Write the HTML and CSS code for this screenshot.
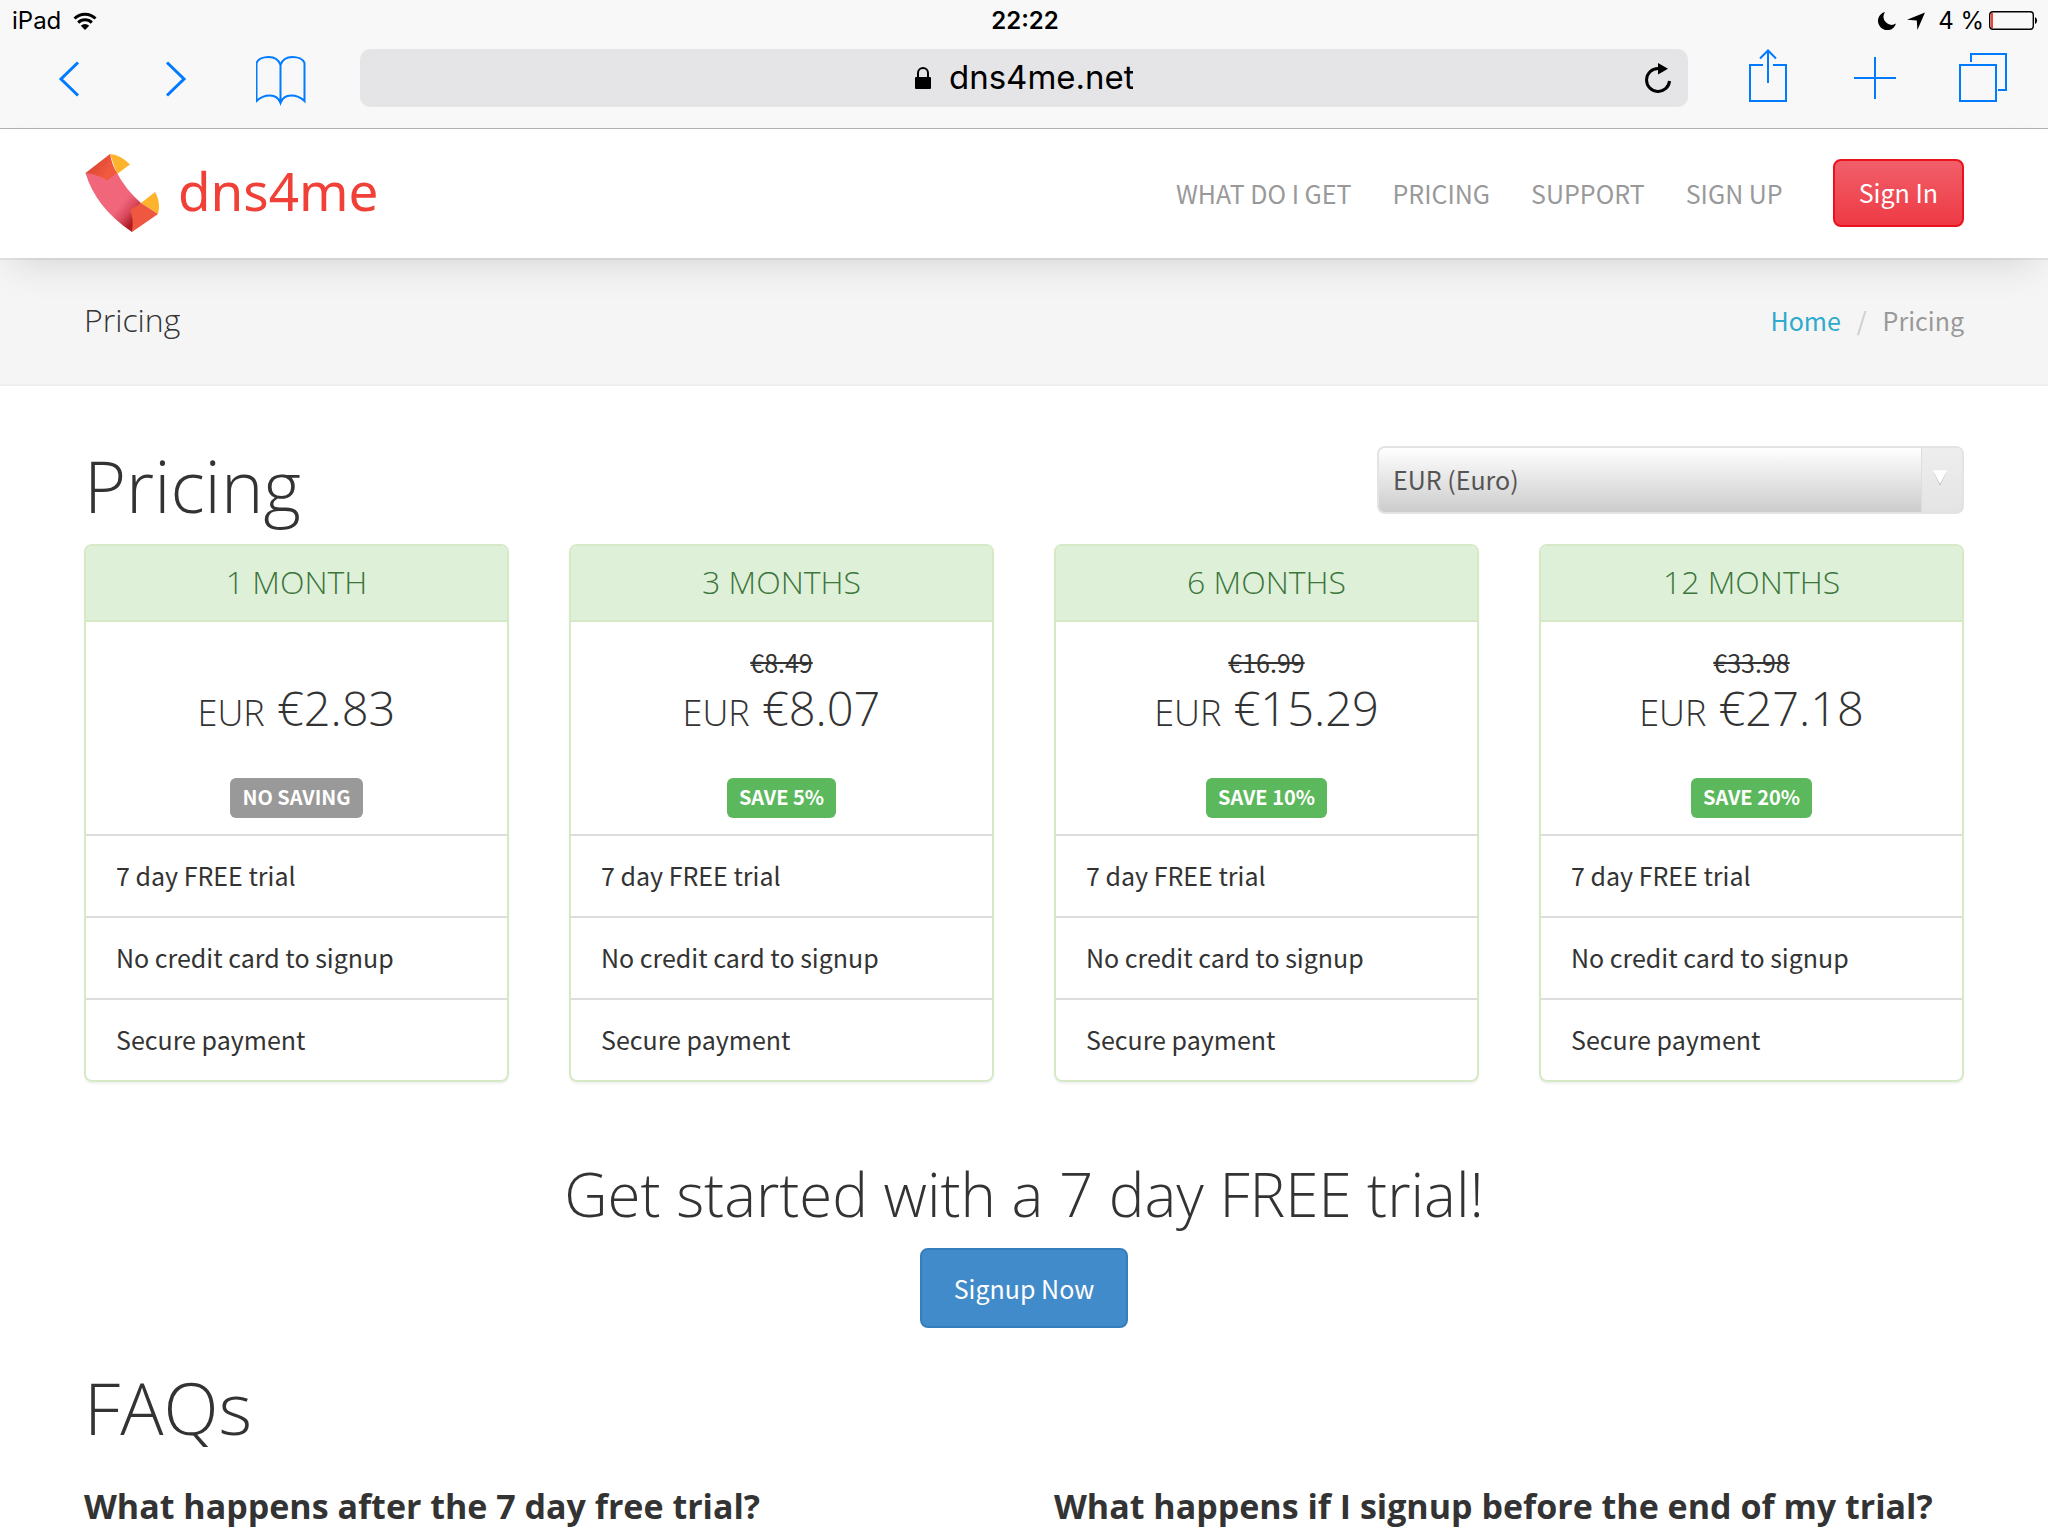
FILE: index.html
```
<!DOCTYPE html>
<html lang="en">
  <head>
    <meta charset="UTF-8" />
    <meta name="viewport" content="width=device-width, initial-scale=1.0" />
    <title>dns4me - Pricing</title>
    <link rel="stylesheet" href="styles.css">
  </head>
  <body>
    <div class="browser">
      <div class="status">
        <div class="status-left">
          <span>iPad</span>
          <svg width="24" height="18" viewBox="0 0 24 18">
            <path d="M1.5 6.5a15 15 0 0 1 21 0M5.2 10.6a9.6 9.6 0 0 1 13.6 0" fill="none" stroke="#000" stroke-width="3" />
            <path d="M12 18l-4.2-4.3a6 6 0 0 1 8.4 0z" />
          </svg>
        </div>
        <span class="time">22:22</span>
        <div class="status-right">
          <svg width="18" height="18" viewBox="0 0 18 18">
            <path d="M7 0A9.2 9.2 0 1 0 18 11.6 8.2 8.2 0 0 1 7 0z" />
          </svg>
          <svg class="location" width="18" height="18" viewBox="0 0 18 18">
            <path d="M18 0.5L10.4 18 9.8 8.6 0 7.8z" />
          </svg>
          <span>4 %</span>
          <svg width="49" height="20" viewBox="0 0 49 20">
            <rect x="0.7" y="0.7" width="43.6" height="17.6" rx="3" fill="none" stroke="#000" stroke-width="1.4" />
            <rect x="2" y="2" width="2" height="15" fill="#ff3b30" />
            <path d="M46 6a4 4 0 0 1 0 7z" />
          </svg>
        </div>
      </div>

      <div class="toolbar">
        <div class="tools">
          <button class="tool" aria-label="Back">
            <svg width="50" height="58" viewBox="0 0 50 58"><path d="M36 13.5L19 30l17 16.5" /></svg>
          </button>
          <button class="tool" aria-label="Forward">
            <svg width="50" height="58" viewBox="0 0 50 58"><path d="M18 13.5L35 30 18 46.5" /></svg>
          </button>
          <button class="tool" aria-label="Bookmarks">
            <svg class="thin" width="50" height="58" viewBox="0 0 50 58">
              <path d="M24.500 16C22.500 10 17.500 8 12.500 8S2 10 0.500 14v38C4.500 48 9 46.500 14 46.500s8.500 2 10.500 7.500c2-5.500 5.500-7.500 10.500-7.500s9.500 1.500 13.500 5.500V14c-1.500-4-7-6-12-6S26.500 10 24.500 16v38" />
            </svg>
          </button>
        </div>
        <div class="address">
          <label class="lock" for="url">
            <svg width="16" height="22" viewBox="0 0 16 22" role="img" aria-label="Address">
              <path d="M3 10V6a5 5 0 0 1 10 0v4" fill="none" stroke="#000" stroke-width="2" />
              <rect y="10" width="16" height="12" rx="1" />
            </svg>
          </label>
          <input class="url" id="url" type="text" value="dns4me.net" />
          <button class="reload" aria-label="Reload">
            <svg width="26" height="30" viewBox="0 0 26 30">
              <path d="M24.500 18A11.500 11.500 0 1 1 13 5.500" fill="none" stroke="#000" stroke-width="3" />
              <path d="M13 0l10 5.800L13 11.500z" />
            </svg>
          </button>
        </div>
        <div class="tools">
          <button class="tool" aria-label="Share">
            <svg class="thin" width="50" height="58" viewBox="0 0 50 58">
              <path d="M20 16H7v36h36V16H30M25 34V2M17 9.500l8-8 8 8" />
            </svg>
          </button>
          <button class="tool" aria-label="New tab">
            <svg class="thin" width="50" height="58" viewBox="0 0 50 58"><path d="M4 29h42M25 8v42" /></svg>
          </button>
          <button class="tool" aria-label="Tabs">
            <svg class="thin" width="50" height="58" viewBox="0 0 50 58">
              <path d="M3 16h36v36H3zM14 13V5h35v36h-8" />
            </svg>
          </button>
        </div>
      </div>
    </div>

    <header class="header">
      <a class="logo" href="#">
        <svg width="76" height="80" viewBox="0 0 76 80">
          <defs>
            <linearGradient id="body" x1="0.300" y1="0.400" x2="0.850" y2="0.900">
              <stop offset="0.450" stop-color="#f2667c" />
              <stop offset="0.700" stop-color="#d94a5e" />
              <stop offset="0.950" stop-color="#ad1a20" />
            </linearGradient>
            <linearGradient id="fold" x1="0" y1="0" x2="1" y2="0.600">
              <stop offset="0.100" stop-color="#d23f2c" />
              <stop offset="0.800" stop-color="#f1593f" />
            </linearGradient>
          </defs>
          <path d="M26 1q11 1 20 10.500L33 21z" fill="#fdb32b" />
          <path d="M71 39q6 10 3 22L57 50z" fill="#fdb32b" />
          <path d="M1.500 20L33 20Q42 37 57 50L48 79Q12 55 1.500 20z" fill="url(#body)" />
          <path d="M1.500 20L26 1q2 11 7 19l-10 7.500Q13 21 1.500 20z" fill="url(#fold)" />
          <path d="M57 50l17 11-26 18q2-14-2-22z" fill="#ee5740" />
        </svg>
        <span>dns4me</span>
      </a>
      <nav class="nav">
        <a href="#">WHAT DO I GET</a>
        <a href="#">PRICING</a>
        <a href="#">SUPPORT</a>
        <a href="#">SIGN UP</a>
        <button class="signin">Sign In</button>
      </nav>
    </header>

    <div class="page-title">
      <h4>Pricing</h4>
      <div class="breadcrumb">
        <a href="#">Home</a>
        <span class="slash">/</span>
        <span>Pricing</span>
      </div>
    </div>

    <main class="container">
      <div class="pricing-head">
        <h1>Pricing</h1>
        <div class="currency">
          <select id="currency" aria-label="Currency">
            <option>EUR (Euro)</option>
          </select>
          <svg class="arrow" width="41" height="64" viewBox="0 0 41 64">
            <path d="M12 24l6.500 14 6.500-14z" fill="#b8b8b8" />
            <path d="M11 22h15l-7.500 14z" fill="#fff" />
          </svg>
        </div>
      </div>

      <div class="plans">
        <div class="plan">
          <h3>1 MONTH</h3>
          <div class="price">
            <p class="old"></p>
            <p class="new"><small>EUR</small> €2.83</p>
            <span class="badge none">NO SAVING</span>
          </div>
          <ul>
            <li>7 day FREE trial</li>
            <li>No credit card to signup</li>
            <li>Secure payment</li>
          </ul>
        </div>
        <div class="plan">
          <h3>3 MONTHS</h3>
          <div class="price">
            <p class="old"><del>€8.49</del></p>
            <p class="new"><small>EUR</small> €8.07</p>
            <span class="badge">SAVE 5%</span>
          </div>
          <ul>
            <li>7 day FREE trial</li>
            <li>No credit card to signup</li>
            <li>Secure payment</li>
          </ul>
        </div>
        <div class="plan">
          <h3>6 MONTHS</h3>
          <div class="price">
            <p class="old"><del>€16.99</del></p>
            <p class="new"><small>EUR</small> €15.29</p>
            <span class="badge">SAVE 10%</span>
          </div>
          <ul>
            <li>7 day FREE trial</li>
            <li>No credit card to signup</li>
            <li>Secure payment</li>
          </ul>
        </div>
        <div class="plan">
          <h3>12 MONTHS</h3>
          <div class="price">
            <p class="old"><del>€33.98</del></p>
            <p class="new"><small>EUR</small> €27.18</p>
            <span class="badge">SAVE 20%</span>
          </div>
          <ul>
            <li>7 day FREE trial</li>
            <li>No credit card to signup</li>
            <li>Secure payment</li>
          </ul>
        </div>
      </div>

      <div class="trial">
        <h2>Get started with a 7 day FREE trial!</h2>
        <button class="signup">Signup Now</button>
      </div>

      <h1>FAQs</h1>
      <div class="faqs">
        <h4>What happens after the 7 day free trial?</h4>
        <h4>What happens if I signup before the end of my trial?</h4>
      </div>
    </main>
  </body>
</html>
```
FILE: styles.css
```
* {
  margin: 0;
  padding: 0;
  box-sizing: border-box;
}

body {
  background: #ffffff;
  color: #333333;
  font-family: "Noto Sans CJK SC", "Noto Sans", sans-serif;
  font-size: 25px;
  line-height: 40px;
}

h1,
h2,
h3,
h4,
.new {
  font-family: "Open Sans", "Noto Sans", sans-serif;
  font-weight: 300;
}

h1 {
  font-size: 72px;
  line-height: 78px;
}

a {
  text-decoration: none;
}

button {
  border: none;
  background: none;
  font: inherit;
  cursor: pointer;
}

svg {
  display: block;
}

/* browser bar */

.browser {
  background: #f8f8f8;
  border-bottom: 1px solid #b2b2b2;
  color: #000000;
  font-family: Inter, sans-serif;
}

.status {
  display: grid;
  grid-template-columns: 1fr auto 1fr;
  align-items: center;
  height: 40px;
  padding: 1px 10px 0 12px;
  font-size: 24px;
}

.status-left,
.status-right {
  display: flex;
  align-items: center;
  gap: 12px;
}

.status-right {
  justify-content: flex-end;
  gap: 5px;
}

.location {
  margin: 0 8px 0 6px;
}

.time {
  font-weight: 600;
}

.toolbar {
  display: flex;
  align-items: center;
  gap: 26px;
  padding: 9px 13px 21px;
}

.tools {
  display: flex;
}

.tool {
  display: flex;
  justify-content: center;
  width: 107px;
}

.tool path {
  fill: none;
  stroke: #007aff;
  stroke-width: 3;
}

.tool .thin path {
  stroke-width: 2;
}

.address {
  flex: 1;
  display: flex;
  align-items: center;
  justify-content: center;
  position: relative;
  height: 58px;
  border-radius: 10px;
  background: #e5e5e8;
}

.lock {
  margin-right: 18px;
}

.url {
  width: 184px;
  padding-bottom: 2px;
  border: none;
  outline: none;
  background: none;
  color: #000000;
  font-family: inherit;
  font-size: 33px;
}

.reload {
  position: absolute;
  right: 17px;
}

/* site header */

.header {
  position: relative;
  display: flex;
  align-items: center;
  justify-content: space-between;
  height: 129px;
  padding: 0 84px 2px;
  background: #ffffff;
  box-shadow: 0 16px 40px -12px rgba(0, 0, 0, 0.14);
}

.logo {
  display: flex;
  align-items: center;
  gap: 18px;
  color: #f04037;
  font-family: "Noto Sans", sans-serif;
  font-size: 53px;
}

.logo span {
  padding-bottom: 3px;
}

.nav {
  display: flex;
  align-items: center;
  gap: 41px;
}

.nav a {
  color: #999999;
}

.signin {
  height: 68px;
  margin-left: 9px;
  padding: 0 24px 2px;
  border: 2px solid #e9131f;
  border-radius: 8px;
  background: linear-gradient(#f15f69, #ee3a45);
  color: #ffffff;
}

.page-title {
  display: flex;
  align-items: center;
  justify-content: space-between;
  height: 128px;
  padding: 0 84px 4px;
  border-top: 2px solid #e5e5e5;
  border-bottom: 2px solid #eeeeee;
  background: #f5f5f5;
}

.page-title h4 {
  font-size: 32px;
}

.breadcrumb {
  display: flex;
  gap: 16px;
  color: #999999;
}

.breadcrumb a {
  color: #2eaacc;
}

.slash {
  color: #cccccc;
}

/* pricing */

.container {
  padding: 60px 84px 10px;
}

.pricing-head {
  display: flex;
  justify-content: space-between;
  margin-bottom: 20px;
}

.currency {
  position: relative;
  width: 587px;
  height: 68px;
}

.currency select {
  width: 100%;
  height: 100%;
  padding: 0 56px 2px 14px;
  border: 2px solid #e3e3e3;
  border-radius: 8px;
  background: linear-gradient(#ffffff, #cccccc);
  color: #555555;
  font: inherit;
  appearance: none;
}

.arrow {
  position: absolute;
  top: 2px;
  right: 2px;
  border-left: 1px solid #dddddd;
  border-radius: 0 6px 6px 0;
  background: linear-gradient(#eeeeee, #e4e4e4);
  pointer-events: none;
}

.plans {
  display: grid;
  grid-template-columns: repeat(4, 1fr);
  gap: 60px;
}

.plan {
  border: 2px solid #d6e9c6;
  border-radius: 8px;
  box-shadow: 0 2px 2px rgba(0, 0, 0, 0.05);
}

.plan h3 {
  padding: 16px 0 18px;
  border-bottom: 2px solid #d6e9c6;
  border-radius: 6px 6px 0 0;
  background: #dff0d8;
  color: #3c763d;
  font-size: 32px;
  text-align: center;
}

.price {
  display: flex;
  flex-direction: column;
  align-items: center;
  padding: 20px 0 16px;
}

.old {
  height: 40px;
}

.new {
  margin-bottom: 44px;
  font-size: 47px;
  line-height: 52px;
}

.new small {
  font-size: 36px;
  line-height: 36px;
}

.badge {
  padding: 0 12px 2px;
  border-radius: 6px;
  background: #5cb85c;
  color: #ffffff;
  font-size: 20px;
  font-weight: 700;
  line-height: 38px;
}

.none {
  background: #999999;
}

.plan ul {
  list-style: none;
}

.plan li {
  padding: 19px 30px 21px;
  border-top: 2px solid #dddddd;
}

/* trial and faqs */

.trial {
  margin: 72px 0 40px;
  text-align: center;
}

.trial h2 {
  margin-bottom: 14px;
  font-size: 60px;
  line-height: 80px;
}

.signup {
  height: 80px;
  padding: 0 32px;
  border: 2px solid #357ebd;
  border-radius: 8px;
  background: #428bca;
  color: #ffffff;
}

.faqs {
  display: grid;
  grid-template-columns: 1fr 1fr;
  gap: 60px;
  margin-top: 40px;
}

.faqs h4 {
  font-size: 34px;
  font-weight: 700;
}

@media (max-width: 1200px) {
  .plans {
    grid-template-columns: 1fr 1fr;
  }

  .faqs {
    grid-template-columns: 1fr;
  }
}
```
